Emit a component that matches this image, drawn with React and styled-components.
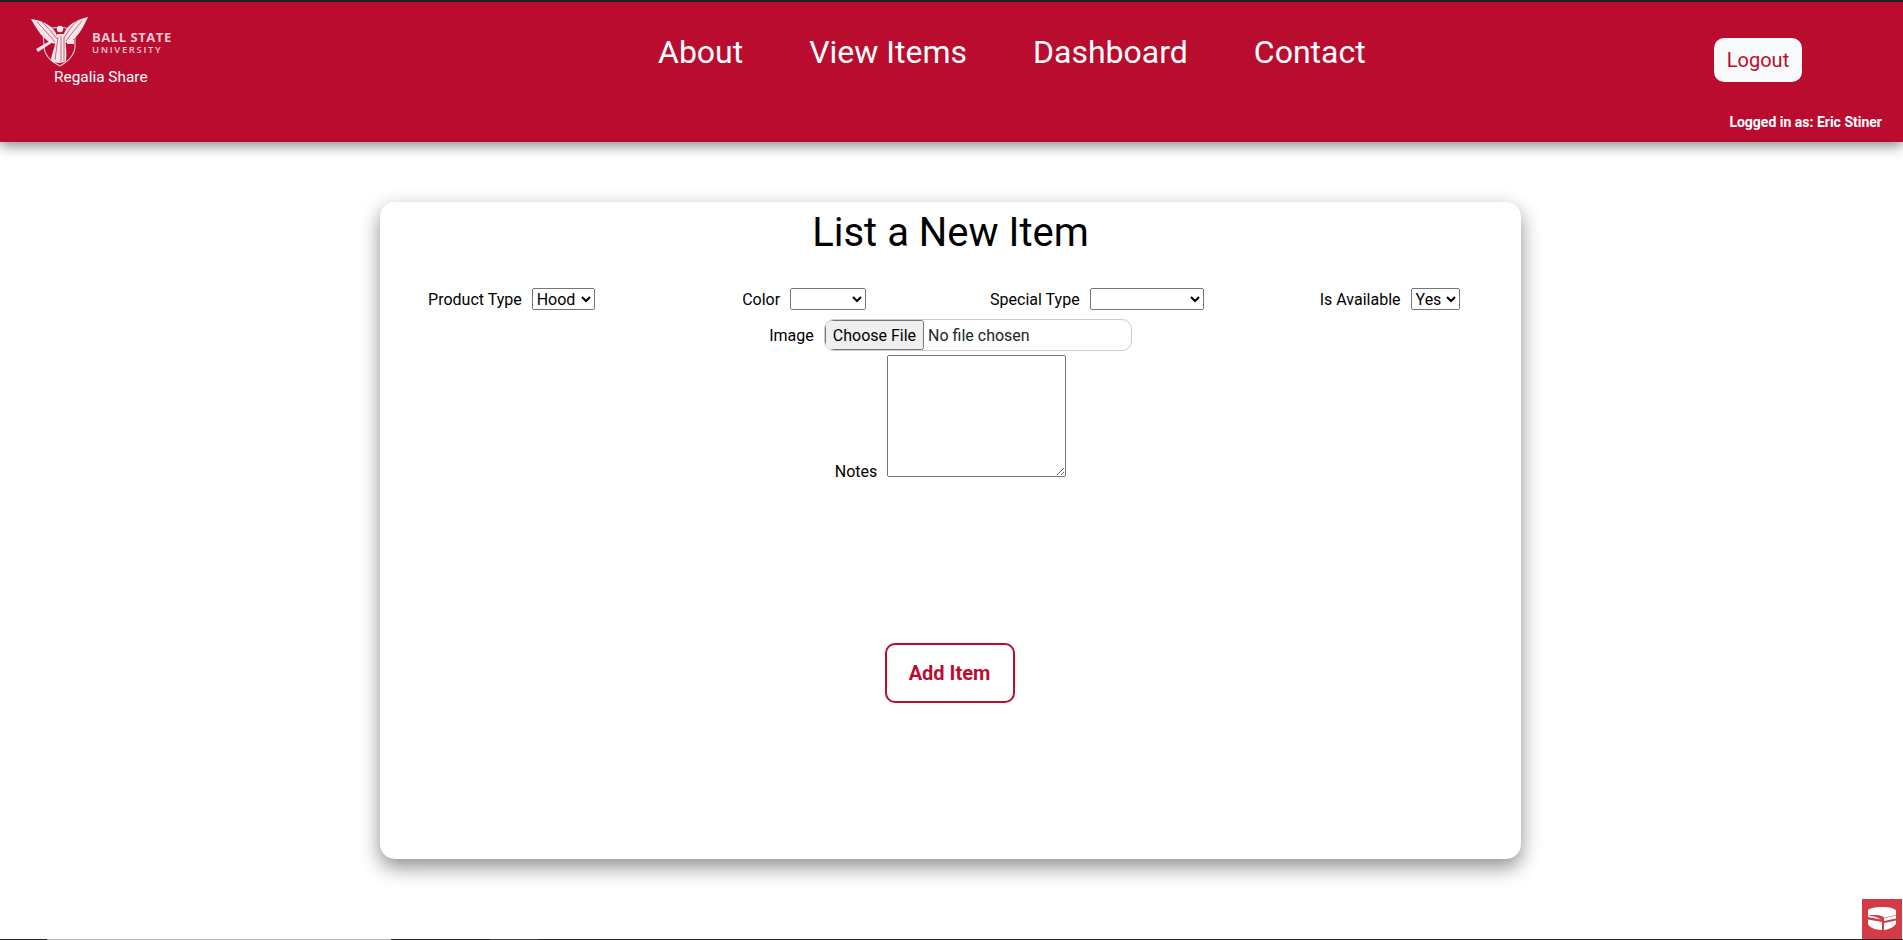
import React from "react";
import styled, { createGlobalStyle } from "styled-components";

const Global = createGlobalStyle`
  html, body { margin: 0; padding: 0; background: #fff; }
  body { font-family: Roboto, "Liberation Sans", sans-serif; color: #000; overflow: hidden; }
`;

const Page = styled.div`
  height: 940px;
  border-top: 2px solid #222;
  box-sizing: border-box;
  position: relative;
  overflow: hidden;
`;

const Header = styled.header`
  height: 140px;
  background: #ba0c2f;
  box-shadow: 0 4px 12px rgba(0, 0, 0, 0.45);
  display: grid;
  grid-template-columns: 658px 1fr 221px;
  color: #fff;
`;

const Brand = styled.a`
  display: flex;
  flex-direction: column;
  width: 200px;
  padding: 15px 0 0 31px;
  box-sizing: border-box;
`;

const LogoRow = styled.div`
  display: flex;
  align-items: flex-start;
  height: 49px;
`;

const Emblem = styled.svg`
  width: 58px;
  height: 50px;
  flex: none;
  filter: blur(0.45px);
`;

const Wordmark = styled.div`
  margin: 14px 0 0 3px;
  display: flex;
  flex-direction: column;
  color: #f0cbd3;
  font-family: "Open Sans", sans-serif;
`;

const WordTop = styled.span`
  font-size: 13px;
  line-height: 13px;
  font-weight: 700;
  letter-spacing: 0.55px;
  white-space: nowrap;
`;

const WordBottom = styled.span`
  font-size: 9.5px;
  line-height: 11px;
  font-weight: 600;
  letter-spacing: 1.65px;
  white-space: nowrap;
`;

const BrandName = styled.div`
  margin: 2px 0 0 23px;
  font-size: 15.4px;
  line-height: 19px;
  white-space: nowrap;
`;

const Nav = styled.nav`
  display: flex;
  gap: 66px;
  padding-top: 30px;
`;

const NavLink = styled.a`
  font-size: 32px;
  line-height: 40px;
  color: #fff;
  white-space: nowrap;
`;

const Account = styled.div`
  display: flex;
  flex-direction: column;
  align-items: flex-end;
  padding: 36px 21px 0 0;
`;

const LogoutButton = styled.button`
  width: 88px;
  height: 44px;
  margin-right: 80px;
  border: 0;
  border-radius: 10px;
  background: #f8f9fa;
  color: #ba0c2f;
  font-family: Roboto, sans-serif;
  font-size: 20px;
  padding: 0;
`;

const LoggedIn = styled.div`
  margin-top: 32px;
  font-size: 14px;
  line-height: 16px;
  font-weight: 700;
  white-space: nowrap;
`;

const Main = styled.main`
  display: flex;
  justify-content: center;
  padding-top: 60px;
`;

const Card = styled.form`
  width: 1141px;
  height: 657px;
  margin-left: -2px;
  border-radius: 15px;
  background: #fff;
  box-shadow: 0 8px 20px rgba(0, 0, 0, 0.45);
  display: flex;
  flex-direction: column;
  align-items: center;
`;

const Title = styled.h1`
  margin: 7px 0 0;
  font-size: 40px;
  line-height: 47px;
  font-weight: 400;
`;

const FieldRow = styled.div`
  align-self: stretch;
  margin: 32px -15px 0;
  display: grid;
  grid-template-columns: repeat(4, 1fr);
`;

const Field = styled.div`
  display: flex;
  justify-content: center;
  align-items: ${(p) => p.$align || "center"};
  gap: 10px;
  font-size: 16px;
`;

const Label = styled.label`
  white-space: nowrap;
  line-height: 19px;
`;

const NotesLabel = styled(Label)`
  margin-bottom: -4px;
`;

const Select = styled.select`
  width: ${(p) => p.$w}px;
  height: 22px;
  font-family: Roboto, sans-serif;
  font-size: 16px;
  padding: 0;
  box-sizing: border-box;
`;

const ImageField = styled(Field)`
  margin-top: 9px;
`;

const FileBox = styled.input`
  width: 308px;
  height: 32px;
  box-sizing: border-box;
  border: 1px solid #ccc;
  border-radius: 10px;
  font-family: Roboto, sans-serif;
  font-size: 16px;
  color: #212529;
  &::file-selector-button {
    height: 30px;
    font-family: Roboto, sans-serif;
    font-size: 16px;
    margin-right: 4px;
    padding: 0 6px;
  }
`;

const NotesField = styled(Field)`
  margin-top: 4px;
`;

const Notes = styled.textarea`
  width: 179px;
  height: 122px;
  box-sizing: border-box;
  display: block;
`;

const AddButton = styled.button`
  margin-top: 166px;
  margin-right: 2px;
  width: 130px;
  height: 60px;
  background: #fff;
  border: 2px solid #ba0c2f;
  border-radius: 10px;
  color: #ba0c2f;
  font-family: Roboto, sans-serif;
  font-size: 20px;
  font-weight: 700;
  padding: 0;
`;

const ToolbarBadge = styled.div`
  position: absolute;
  right: 1px;
  bottom: 1px;
  width: 40px;
  height: 40px;
  background: #d33c44;
  display: flex;
  align-items: center;
  justify-content: center;
`;

const BottomEdge = styled.div`
  position: absolute;
  left: 0;
  right: 0;
  bottom: 0;
  height: 1px;
  background: linear-gradient(
    to right,
    #222 0 47px,
    #bbb 47px 391px,
    #222 391px 490px,
    #444 490px 538px,
    #222 538px
  );
`;

const Logo = () => (
  <Emblem viewBox="0 0 58 50" aria-hidden="true">
    <path
      d="M12 15C18 9 38 9 44 15V29C44 38 36 45 29 49C21 45 13 38 13 29Z"
      fill="none"
      stroke="#f0cfd6"
      strokeWidth="1.1"
    />
    <g fill="#f8e6ea">
      <path d="M0 2C8 3 17 6 23 13C26 17 27 21 27 27L20 26C12 22 6 13 0 2Z" />
      <path d="M57 0C49 2 41 5 36 11C33 15 32 19 32 26L39 25C47 20 52 11 57 0Z" />
      <path d="M26 17C25 28 20 38 20 44C24 46 31 47 35 44C36 34 35 26 33 17Z" />
      <circle cx="29" cy="12" r="3.2" />
      <path d="M5 32L24 21L25 23L7 35Z" />
      <rect x="36" y="23" width="7" height="4" />
    </g>
    <g fill="none" stroke="#ba0c2f" strokeWidth="0.8" opacity="0.75">
      <path d="M6 5C12 11 18 18 24 25" />
      <path d="M11 5C16 10 21 15 26 22" />
      <path d="M51 4C46 10 40 17 35 24" />
      <path d="M46 4C42 8 37 14 33 21" />
      <path d="M27 20L24 43M30 19V45M33 20L33 44" />
    </g>
  </Emblem>
);

const CakeIcon = () => (
  <svg width="30" height="24" viewBox="0 0 30 24" aria-hidden="true">
    <path
      fill="#fff"
      d="M1 4C1 1.500 8 0 15 0C22 0 29 1.500 29 4V8L17 10.500C14 7.500 5 8 1 8.500ZM1 8.500C5 9 11 10 14 12.500L1 10Z"
    />
    <path fill="#fff" d="M17 11L29 8.500V11.500L17 14Z" />
    <path fill="#fff" d="M1 12.500L15 15V23C8 23 2 20 1 17Z" />
    <path fill="#fff" d="M17 16L29 13.500V16C28 20 22 22.500 17 23Z" />
  </svg>
);

export default function App() {
  return (
    <Page>
      <Global />
      <Header>
        <Brand>
          <LogoRow>
            <Logo />
            <Wordmark>
              <WordTop>BALL STATE</WordTop>
              <WordBottom>UNIVERSITY</WordBottom>
            </Wordmark>
          </LogoRow>
          <BrandName>Regalia Share</BrandName>
        </Brand>
        <Nav>
          <NavLink>About</NavLink>
          <NavLink>View Items</NavLink>
          <NavLink>Dashboard</NavLink>
          <NavLink>Contact</NavLink>
        </Nav>
        <Account>
          <LogoutButton type="button">Logout</LogoutButton>
          <LoggedIn>Logged in as: Eric Stiner</LoggedIn>
        </Account>
      </Header>
      <Main>
        <Card onSubmit={(e) => e.preventDefault()}>
          <Title>List a New Item</Title>
          <FieldRow>
            <Field>
              <Label>Product Type</Label>
              <Select $w={63} defaultValue="Hood">
                <option>Hood</option>
                <option>Gown</option>
              </Select>
            </Field>
            <Field>
              <Label>Color</Label>
              <Select $w={76}>
                <option></option>
              </Select>
            </Field>
            <Field>
              <Label>Special Type</Label>
              <Select $w={114}>
                <option></option>
              </Select>
            </Field>
            <Field>
              <Label>Is Available</Label>
              <Select $w={49} defaultValue="Yes">
                <option>Yes</option>
                <option>No</option>
              </Select>
            </Field>
          </FieldRow>
          <ImageField>
            <Label>Image</Label>
            <FileBox type="file" />
          </ImageField>
          <NotesField $align="flex-end">
            <NotesLabel>Notes</NotesLabel>
            <Notes />
          </NotesField>
          <AddButton type="submit">Add Item</AddButton>
        </Card>
      </Main>
      <ToolbarBadge>
        <CakeIcon />
      </ToolbarBadge>
      <BottomEdge />
    </Page>
  );
}
